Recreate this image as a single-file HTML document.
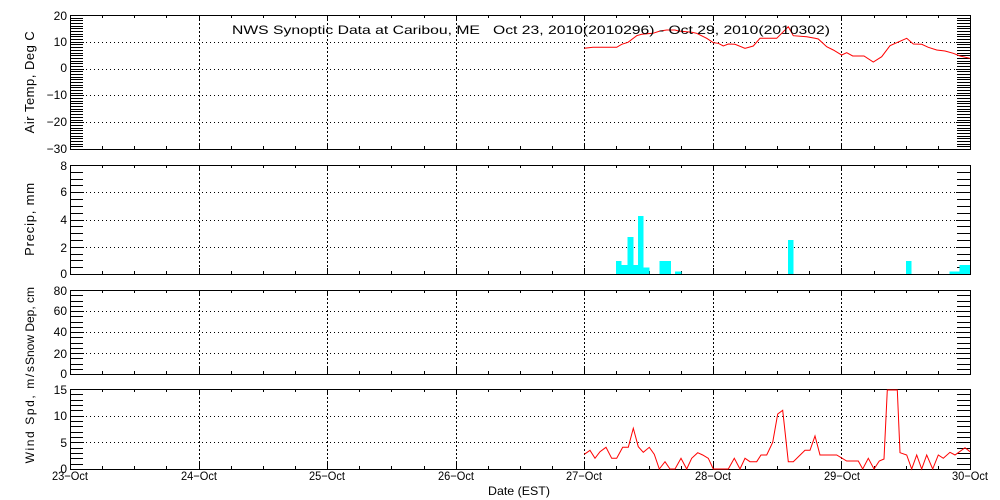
<!DOCTYPE html>
<html><head><meta charset="utf-8"><style>
html,body{margin:0;padding:0;background:#fff;}
svg{display:block;font-family:"Liberation Sans",sans-serif;}
</style></head><body>
<svg id="s" width="1000" height="500" viewBox="0 0 1000 500" xmlns="http://www.w3.org/2000/svg">
<g id="g" shape-rendering="crispEdges"></g>
<g font-size="12" fill="#000">
<text x="232" y="34" font-size="12" textLength="598" lengthAdjust="spacingAndGlyphs" xml:space="preserve">NWS Synoptic Data at Caribou, ME   Oct 23, 2010(2010296) - Oct 29, 2010(2010302)</text>
<g text-anchor="end">
<text x="67" y="20">20</text><text x="67" y="46">10</text><text x="67" y="72">0</text><text x="67" y="99">−10</text><text x="67" y="126">−20</text><text x="67" y="153">−30</text>
<text x="67" y="170">8</text><text x="67" y="196">6</text><text x="67" y="224">4</text><text x="67" y="252">2</text><text x="67" y="278">0</text>
<text x="67" y="295">80</text><text x="67" y="315">60</text><text x="67" y="336">40</text><text x="67" y="358">20</text><text x="67" y="378">0</text>
<text x="67" y="394">15</text><text x="67" y="420">10</text><text x="67" y="447">5</text><text x="67" y="473">0</text>
</g>
<text x="52" y="480" textLength="36" lengthAdjust="spacingAndGlyphs">23−Oct</text>
<text x="181" y="480" textLength="36" lengthAdjust="spacingAndGlyphs">24−Oct</text>
<text x="309" y="480" textLength="36" lengthAdjust="spacingAndGlyphs">25−Oct</text>
<text x="438" y="480" textLength="36" lengthAdjust="spacingAndGlyphs">26−Oct</text>
<text x="566" y="480" textLength="36" lengthAdjust="spacingAndGlyphs">27−Oct</text>
<text x="695" y="480" textLength="36" lengthAdjust="spacingAndGlyphs">28−Oct</text>
<text x="824" y="480" textLength="36" lengthAdjust="spacingAndGlyphs">29−Oct</text>
<text x="952" y="480" textLength="36" lengthAdjust="spacingAndGlyphs">30−Oct</text>
<text x="488" y="495" textLength="62" lengthAdjust="spacingAndGlyphs">Date (EST)</text>
<g text-anchor="middle" font-size="13">
<text transform="translate(34,82) rotate(-90)" letter-spacing="0.5">Air Temp, Deg C</text>
<text transform="translate(34,219) rotate(-90)" letter-spacing="0.8">Precip, mm</text>
<text transform="translate(34,326) rotate(-90)" font-size="12">Snow Dep, cm</text>
<text transform="translate(34,414) rotate(-90)" font-size="12" letter-spacing="1.6">Wind Spd, m/s</text>
</g>
</g>
</svg>
<script>
var g=document.getElementById('g'),NS='http://www.w3.org/2000/svg';
function el(t,a){var e=document.createElementNS(NS,t);for(var k in a)e.setAttribute(k,a[k]);g.appendChild(e);return e;}
function L(x1,y1,x2,y2,o){var a={x1:x1,y1:y1,x2:x2,y2:y2,stroke:'#000','stroke-width':1};for(var k in o)a[k]=o[k];el('line',a);}
var X0=70,X1=970,dw=(X1-X0)/7;
var P=[[15,149,20,-30,1,10],[165,274,8,0,0.5,2],[290,374,80,0,5,20],[389,469,15,0,1,5]];
P.forEach(function(p){
 var t=p[0],b=p[1],vt=p[2],vb=p[3],mi=p[4],ma=p[5];
 function Y(v){return b+(v-vb)*(t-b)/(vt-vb);}
 for(var v=vb+ma;v<vt-1e-6;v+=ma){var y=Math.round(Y(v))+0.5;L(X0,y,X1,y,{'stroke-dasharray':'1,3'});L(X0,y,X0+14,y);L(X1-14,y,X1,y);}
 for(var d=1;d<7;d++){var x=Math.round(X0+d*dw)+0.5;L(x,t,x,b,{'stroke-dasharray':'2,2'});}
 var n=Math.round((vt-vb)/mi);
 for(var i=1;i<n;i++){var y=Math.round(Y(vb+i*mi))+0.5;L(X0,y,X0+13,y);L(X1-13,y,X1,y);}
 for(var q=1;q<28;q++){var x=Math.round(X0+q*dw/4)+0.5;var len=(q%4==0)?6:3;L(x,t,x,t+len);L(x,b-len,x,b);}
 el('rect',{x:X0+0.5,y:t+0.5,width:X1-X0,height:b-t,fill:'none',stroke:'#000','stroke-width':1.2});
});
var temp=[[584.3,48.3],[593,47.3],[616.7,47.3],[621.7,44.3],[628,42.3],[636.7,35.7],[641.7,34.3],[653,33.3],[660,31],[666.7,30],[675,30],[678.3,31],[691.7,32.3],[696.7,33.3],[706.7,38.3],[713.3,42.7],[718.3,43.3],[723.3,46],[728.3,44],[735,44.3],[745,48.3],[753.3,46],[760,38.3],[776.7,38.3],[788.3,26.7],[793.3,35.7],[806.7,36.7],[815,38.3],[818.3,39],[826.7,46.7],[833.3,50],[841.7,55],[846.7,52.7],[852.7,56],[864,56],[873.3,62],[881.7,56.7],[890,45.7],[906.7,38.3],[913.3,44],[921.7,44.3],[928.3,47.3],[936.7,50],[945,51],[953.3,53.3],[960,56],[970,58.3]];
var wind=[[584.3,454.3],[590,450.3],[595,458.3],[600,451.7],[606,447.3],[611.7,458.3],[616.7,458.3],[622.7,447.3],[628.3,447.3],[633.3,428.3],[638.3,446.7],[643.3,452.3],[649.3,447.3],[654.3,454.3],[659.3,469],[665,461.7],[670,469],[675,469],[681,458.3],[686.7,469],[691.7,458.3],[697.7,452.7],[702.7,455],[708.3,458.3],[713.3,469],[728.3,469],[734.3,458.3],[740,469],[745,458.3],[750,461.7],[756.7,461.7],[761,455],[766.7,455],[772.7,442.3],[777.7,414],[782.7,410.3],[788.3,461.7],[793.3,461.7],[805,450.3],[810,450.3],[815,436],[820,455],[836.7,455],[846.7,461],[858.3,461],[862.7,469],[868.3,458.3],[874,469],[879.3,461],[884,459],[887.3,390],[897.3,390],[900,452.7],[906.7,455],[911.7,469],[916.7,455],[921.7,469],[926.7,455],[932.7,469],[938.3,455],[943.3,458.3],[950,452.3],[955,455],[965,447.7],[970,451.7]];
var bars=[[616,621.7,261],[621.7,627.3,265],[627.3,633.3,237],[633.3,638,265],[638,643.7,216],[643.7,649.3,267.7],[659.3,671,261],[675,681.7,271.7],[788,793.7,240],[906,911.7,261],[949.3,959.3,271.7],[959.3,970,265]];
bars.forEach(function(b){el('rect',{x:b[0],y:b[2],width:b[1]-b[0],height:274-b[2],fill:'#00ffff'});});
function pl(pts){el('polyline',{points:pts.map(function(p){return p.join(',')}).join(' '),fill:'none',stroke:'#ff0000','stroke-width':1,'shape-rendering':'auto'});}
pl(temp);pl(wind);
</script>
</body></html>
